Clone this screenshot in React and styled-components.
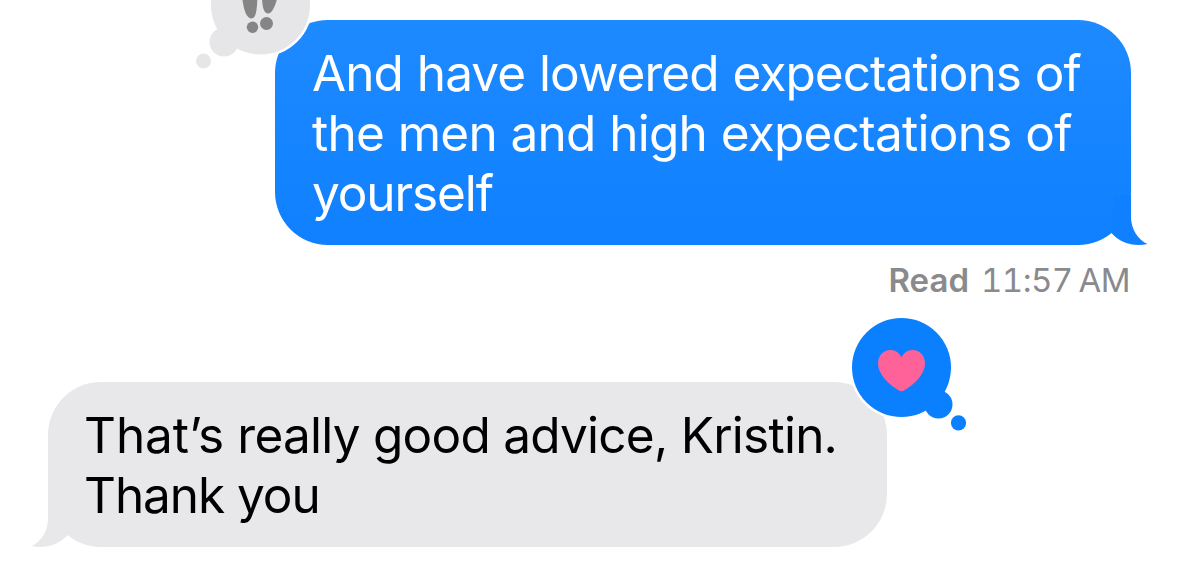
import React from 'react'
import styled, { createGlobalStyle } from 'styled-components'

const GlobalStyle = createGlobalStyle`
  body {
    margin: 0;
    background: #fff;
    overflow: hidden;
  }
`
const Thread = styled.main`
  position: relative;
  box-sizing: border-box;
  display: flex;
  flex-direction: column;
  width: 1179px;
  height: 577px;
  padding: 20px 48px 0;
  overflow: hidden;
  font-family: Inter, 'Liberation Sans', sans-serif;
`
const Bubble = styled.div`
  position: relative;
  box-sizing: border-box;
  padding: 23px 37px 22px;
  border-radius: 53px;
  font-size: 49.5px;
  line-height: 60px;
  white-space: nowrap;
`
const SentBubble = styled(Bubble)`
  align-self: flex-end;
  width: 856px;
  height: 225px;
  color: #fff;
  background: linear-gradient(#1e8aff, #0f80ff);
`
const ReceivedBubble = styled(Bubble)`
  align-self: flex-start;
  width: 839px;
  height: 165px;
  margin-top: 84px;
  padding-left: 36px;
  color: #000;
  background: #e8e8ea;
`
const Line = styled.div`
  letter-spacing: ${props => props.$spacing || 0}px;
  word-spacing: ${props => props.$gap || 0}px;
`
const Word = styled.span`
  letter-spacing: ${props => props.$spacing}px;
`
const Tail = styled.svg`
  position: absolute;
  bottom: 0;
  ${props => (props.$side === 'right' ? 'right: -17px;' : 'left: -17px;')}
  transform: ${props => (props.$side === 'left' ? 'scaleX(-1)' : 'none')};
`
const Reaction = styled.svg`
  position: absolute;
  left: ${props => props.$left}px;
  top: ${props => props.$top}px;
  overflow: visible;
`
const Receipt = styled.div`
  display: flex;
  align-self: flex-end;
  gap: 12px;
  height: 36px;
  margin-top: 17px;
  padding-right: 1px;
  font-size: 33px;
  line-height: 36px;
  color: #8a8a8d;
`
const Status = styled.span`
  font-weight: 600;
`
const Time = styled.span`
  font-variant-numeric: tabular-nums;
  letter-spacing: -0.55px;
  word-spacing: -2.5px;
`

const BubbleTail = ({ side, color }) => (
  <Tail $side={side} width="54" height="50" viewBox="0 0 54 50">
    <path
      d="M20 0H37V22C37 34 44 45 53.5 49C40 52 26 48 17.5 38Z"
      fill={color}
    />
  </Tail>
)

const Emphasis = () => (
  <Reaction $left={-80} $top={-65} width="120" height="120" viewBox="0 0 120 120">
    <circle cx="65.5" cy="50" r="52" fill="#fff" />
    <g fill="#e6e6e8">
      <circle cx="65.5" cy="50" r="49.5" />
      <circle cx="29" cy="87" r="14.5" />
      <circle cx="8.5" cy="106" r="7.5" />
    </g>
    <g fill="#858585">
      <path d="M47 40C48 53 51 63.5 56.5 63.5C61.5 63.5 62 53 62.5 40Z" />
      <path d="M67 40C67 51 68.5 58.5 73 58.5C77.5 58.5 81 49 83 40Z" />
      <circle cx="57.5" cy="72.3" r="5.7" />
      <circle cx="71.5" cy="68.5" r="6.5" />
    </g>
  </Reaction>
)

const Love = () => (
  <Reaction $left={802} $top={-66} width="120" height="120" viewBox="0 0 120 120">
    <circle cx="51.5" cy="51.5" r="52" fill="#fff" />
    <g fill="#0a80ff">
      <circle cx="51.5" cy="51.5" r="49.5" />
      <circle cx="88.5" cy="88.5" r="14" />
      <circle cx="108.5" cy="106.8" r="7.6" />
    </g>
    <path
      d="M51.5 41.5C49.5 37 45.5 34 40.5 34C33.3 34 28 39.8 28 47.5C28 58 38.5 68.5 49 74.6Q51.5 76 54 74.6C64.5 68.5 75 58 75 47.5C75 39.8 69.7 34 62.5 34C57.5 34 53.5 37 51.5 41.5Z"
      fill="#ff6299"
    />
  </Reaction>
)

const App = () => (
  <>
    <GlobalStyle />
    <Thread>
      <SentBubble>
        <Emphasis />
        <Line $spacing={-0.95} $gap={1}>
          And have lowered expectations of
        </Line>
        <Line $spacing={-0.72} $gap={0.3}>
          the men and high expectations of
        </Line>
        <Line $spacing={-1.1}>yourself</Line>
        <BubbleTail side="right" color="#0f80ff" />
      </SentBubble>
      <Receipt>
        <Status>Read</Status>
        <Time>11:57 AM</Time>
      </Receipt>
      <ReceivedBubble>
        <Line $spacing={-0.75}>
          <Word $spacing={-0.05}>That’s</Word> really good advice, Kristin.
        </Line>
        <Line $spacing={-1.05}>Thank you</Line>
        <BubbleTail side="left" color="#e8e8ea" />
        <Love />
      </ReceivedBubble>
    </Thread>
  </>
)

export default App
